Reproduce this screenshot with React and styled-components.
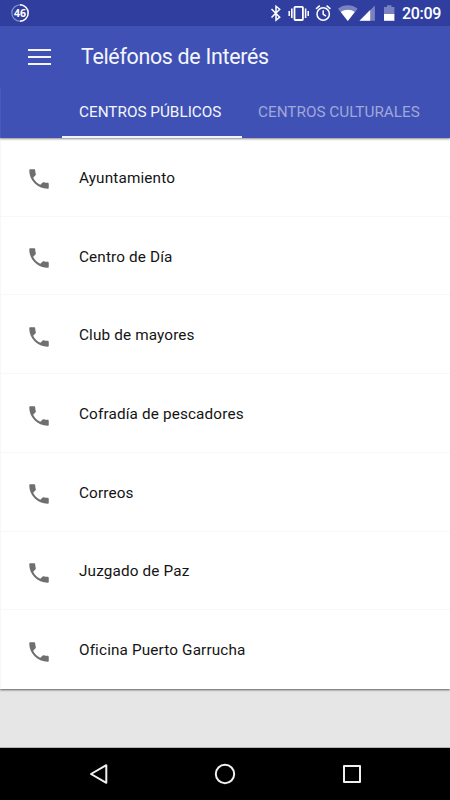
import styled, { createGlobalStyle } from "styled-components";

const contacts = [
   "Ayuntamiento",
   "Centro de Día",
   "Club de mayores",
   "Cofradía de pescadores",
   "Correos",
   "Juzgado de Paz",
   "Oficina Puerto Garrucha",
];

const GlobalStyle = createGlobalStyle`
   * {
      box-sizing: border-box;
   }

   body {
      margin: 0;
      font-family: Roboto, "Liberation Sans", sans-serif;
      background-color: #e6e6e6;
   }
`;

const Screen = styled.div`
   display: flex;
   flex-direction: column;
   width: 450px;
   height: 800px;
   overflow: hidden;
   background-color: #e6e6e6;
`;

const StatusBar = styled.div`
   display: flex;
   align-items: center;
   justify-content: space-between;
   flex: none;
   height: 26px;
   padding: 0 9px 0 10px;
   background-color: #303f9f;
   color: #ffffff;
`;

const StatusIcons = styled.div`
   display: flex;
   align-items: center;

   svg {
      display: block;
   }
`;

const Clock = styled.span`
   width: 39px;
   margin-left: 7px;
   font-size: 16px;
   line-height: 26px;
   font-weight: 500;
   letter-spacing: -0.3px;
   padding-top: 1px;
`;

const Header = styled.header`
   flex: none;
   height: 112px;
   background-color: #3f51b5;
   color: #ffffff;
   box-shadow: 0 1px 2px rgba(0, 0, 0, 0.45);
   z-index: 1;
`;

const Toolbar = styled.div`
   display: flex;
   align-items: center;
   height: 62px;
   padding-left: 28px;
`;

const MenuButton = styled.button`
   display: flex;
   flex-direction: column;
   gap: 5px;
   width: 23px;
   margin: 0;
   padding: 0;
   border: none;
   background: none;
`;

const MenuLine = styled.span`
   height: 2px;
   background-color: #f4f6ff;
`;

const Title = styled.h1`
   margin: 0 0 0 30px;
   font-size: 21.4px;
   line-height: 30px;
   font-weight: 400;
   letter-spacing: -0.3px;
   color: #f5f6fc;
`;

const Tabs = styled.nav`
   display: flex;
   height: 50px;
   padding-left: 61px;
   border-left: 1px solid #4a5bb9;
`;

const Tab = styled.div`
   flex: none;
   height: 50px;
   padding: 0 16px 0 17px;
   border-bottom: 2.6px solid ${({ $active }) => ($active ? "#f1f2fa" : "transparent")};
   width: ${({ $width }) => $width}px;
   color: ${({ $active }) => ($active ? "#f5f6fc" : "#9fa8da")};
   font-size: 15.3px;
   line-height: 48px;
   white-space: nowrap;

   & + & {
      padding-left: 16px;
   }
`;

const List = styled.ul`
   flex: none;
   margin: 0;
   padding: 0;
   list-style: none;
   background-color: #ffffff;
   border-left: 1px solid #f7f7f7;
   box-shadow: 0 1px 2px rgba(0, 0, 0, 0.6);
`;

const Row = styled.li`
   display: flex;
   align-items: center;
   height: 78.72px;
   padding: 1px 0 0 25px;
   border-bottom: 1px solid #f8f8f8;

   &:last-child {
      border-bottom-color: transparent;
   }
`;

const PhoneIcon = styled.svg`
   flex: none;
   width: 26px;
   height: 26px;
   margin-top: 4px;
   fill: #6f6f6f;
`;

const Name = styled.span`
   margin: 1px 0 0 27px;
   font-size: 15.3px;
   line-height: 20px;
   letter-spacing: 0.14px;
   color: #141414;
`;

const NavBar = styled.div`
   display: flex;
   align-items: center;
   justify-content: space-between;
   flex: none;
   height: 53px;
   margin-top: auto;
   padding: 0 86px;
   border-top: 1px solid #b4b4b4;
   background-color: #000000;
`;

const NavIcon = styled.svg`
   width: 24px;
   height: 24px;
   fill: none;
   stroke: #f0f0f0;
   stroke-width: 2;
   stroke-linejoin: round;
`;

const Counter = () => (
   <svg width="20" height="20" viewBox="0 0 20 20">
      <circle cx="10" cy="10" r="8.2" fill="none" stroke="#8790c8" strokeWidth="1.2" />
      <path d="M10 1.8a8.2 8.2 0 0 1 0 16.4" fill="none" stroke="#fff" strokeWidth="1.4" />
      <text x="10" y="14" textAnchor="middle" fill="#fff" fontFamily="Open Sans" fontSize="10.5" fontWeight="700">46</text>
   </svg>
);

const Bluetooth = () => (
   <svg width="18" height="26" viewBox="267 0 18 26" fill="none" stroke="#fff" strokeWidth="1.5">
      <path d="M271.5 9l8.2 8.2-3.7 3V6.2l3.7 3-8.2 8.3" />
   </svg>
);

const Vibrate = () => (
   <svg width="28" height="26" viewBox="285 0 28 26" fill="none" stroke="#fff">
      <rect x="294.5" y="6.8" width="8.4" height="13.2" rx="0.8" strokeWidth="1.8" />
      <path d="M291.8 8.5v9.5M305.6 8.5v9.5" strokeWidth="1.6" />
      <path d="M289.2 11v5M308.2 11v5" strokeWidth="1.5" />
   </svg>
);

const Alarm = () => (
   <svg width="23" height="26" viewBox="313 0 23 26" fill="none" stroke="#fff" strokeWidth="1.5">
      <circle cx="323.2" cy="14" r="6.2" />
      <path d="M323.2 10.3v4.1l2.8 1.6M316 8.8l3.8-3.1M330.4 8.8l-3.8-3.1" />
   </svg>
);

const Wifi = () => (
   <svg width="22" height="26" viewBox="336 0 22 26">
      <path d="M338 8.8c5.8-4.6 13.8-4.6 19.6 0L347.8 21z" fill="#7983c2" />
      <path d="M340.8 12.1c4.1-3.2 9.9-3.2 14 0L347.8 21z" fill="#fff" />
   </svg>
);

const Signal = () => (
   <svg width="18" height="26" viewBox="358 0 18 26">
      <path d="M359.5 20.8h15.4V5.4z" fill="#7983c2" />
      <path d="M359.5 20.8h10.7V10.1z" fill="#fff" />
   </svg>
);

const Battery = () => (
   <svg width="19" height="26" viewBox="376 0 19 26">
      <path d="M384 7h3V5.3h4.4V7h3v7H384z" fill="#7983c2" />
      <path d="M384 14h10.4v6.8H384z" fill="#fff" />
   </svg>
);

const ContactRow = ({ name }) => (
   <Row>
      <PhoneIcon viewBox="0 0 24 24">
         <path d="M6.62 10.79c1.44 2.83 3.76 5.14 6.59 6.59l2.2-2.2c.27-.27.67-.36 1.02-.24 1.12.37 2.33.57 3.57.57.55 0 1 .45 1 1V20c0 .55-.45 1-1 1-9.39 0-17-7.61-17-17 0-.55.45-1 1-1h3.5c.55 0 1 .45 1 1 0 1.25.2 2.45.57 3.57.11.35.03.74-.25 1.02l-2.2 2.2z" />
      </PhoneIcon>
      <Name>{name}</Name>
   </Row>
);

const App = () => {
   return (
      <>
         <GlobalStyle />
         <Screen>
            <StatusBar>
               <Counter />
               <StatusIcons>
                  <Bluetooth />
                  <Vibrate />
                  <Alarm />
                  <Wifi />
                  <Signal />
                  <Battery />
                  <Clock>20:09</Clock>
               </StatusIcons>
            </StatusBar>
            <Header>
               <Toolbar>
                  <MenuButton aria-label="Menú">
                     <MenuLine />
                     <MenuLine />
                     <MenuLine />
                  </MenuButton>
                  <Title>Teléfonos de Interés</Title>
               </Toolbar>
               <Tabs>
                  <Tab $active $width={180}>CENTROS PÚBLICOS</Tab>
                  <Tab $width={197}>CENTROS CULTURALES</Tab>
               </Tabs>
            </Header>
            <List>
               {contacts.map((name) => <ContactRow key={name} name={name} />)}
            </List>
            <NavBar>
               <NavIcon viewBox="0 0 24 24">
                  <path d="M20.3 3.2v17.6L5 12z" />
               </NavIcon>
               <NavIcon viewBox="0 0 24 24">
                  <circle cx="12" cy="12" r="9.2" />
               </NavIcon>
               <NavIcon viewBox="0 0 24 24">
                  <rect x="4" y="4" width="16" height="16" />
               </NavIcon>
            </NavBar>
         </Screen>
      </>
   );
};

export default App;
